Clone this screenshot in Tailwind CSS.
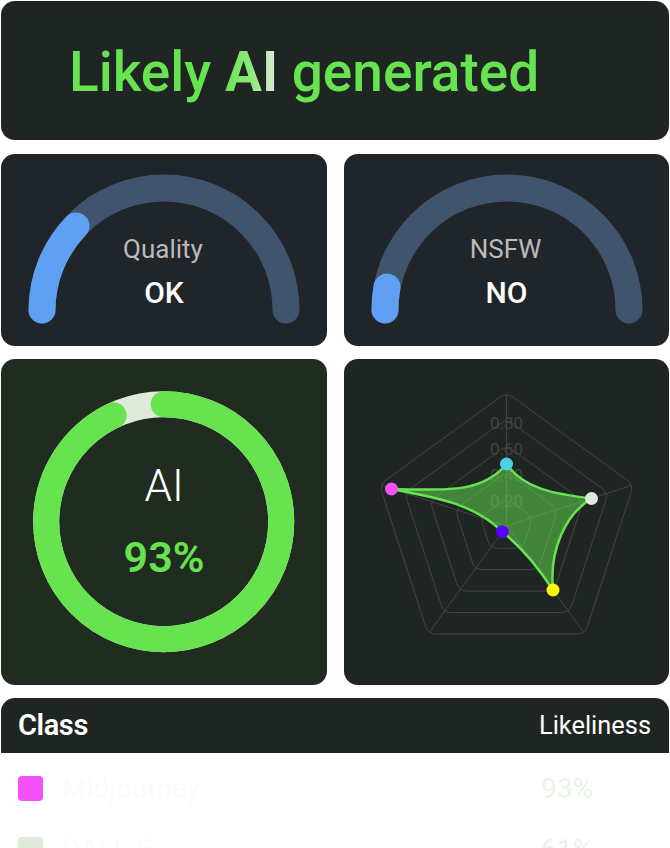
<!DOCTYPE html>
<html lang="en">
<head>
    <meta charset="UTF-8">
    <meta name="viewport" content="width=device-width, initial-scale=1.0">
    <title>AI image report</title>
    <script src="https://cdn.jsdelivr.net/npm/@tailwindcss/browser@4"></script>
</head>
<body class="bg-white">
    <div class="h-[848px] overflow-hidden px-px pt-px font-['Roboto',sans-serif]">
        <!-- verdict -->
        <div class="h-[139px] rounded-[14px] bg-[#1f2523] pl-[68px] pt-[36px]">
            <h1 class="text-[55px] leading-[70px] font-medium text-[#66e34f]">
                Likely <span class="font-bold bg-linear-to-r from-[#66e34f] via-[#8eea7b] to-[#dfeadb] bg-clip-text text-transparent">AI</span> generated
            </h1>
        </div>

        <!-- gauges -->
        <div class="mt-[14px] grid grid-cols-[326px_325px] gap-x-[17px]">
            <div class="relative h-[192px] rounded-[14px] bg-[#20252a]">
                <svg width="326" height="192" viewBox="0 0 326 192" fill="none" stroke-linecap="round" stroke-width="27">
                    <path d="M41 156 A122 122 0 0 1 285 156" stroke="#40546d"/>
                    <path d="M41 156 A122 122 0 0 1 75 72" stroke="#60a0f3"/>
                </svg>
                <div class="absolute inset-x-0 top-[79px] text-center">
                    <p class="text-[26px] leading-[32px] text-[#bdbbb9] -translate-x-px">Quality</p>
                    <p class="mt-[11px] text-[30px] leading-[34px] font-medium text-white">OK</p>
                </div>
            </div>
            <div class="relative h-[192px] rounded-[14px] bg-[#20252a]">
                <svg width="325" height="192" viewBox="0 0 325 192" fill="none" stroke-linecap="round" stroke-width="27">
                    <path d="M41 156 A122 122 0 0 1 285 156" stroke="#40546d"/>
                    <path d="M41 156 A122 122 0 0 1 43 133" stroke="#60a0f3"/>
                </svg>
                <div class="absolute inset-x-0 top-[79px] text-center">
                    <p class="text-[26px] leading-[32px] text-[#bdbbb9] -translate-x-px">NSFW</p>
                    <p class="mt-[11px] text-[30px] leading-[34px] font-medium text-white">NO</p>
                </div>
            </div>
        </div>

        <!-- score ring and radar -->
        <div class="mt-[13px] grid grid-cols-[326px_325px] gap-x-[17px]">
            <div class="relative h-[326px] rounded-[14px] bg-[#212c21]">
                <svg width="326" height="326" viewBox="0 0 326 326" fill="none" stroke-width="26">
                    <circle cx="162.700" cy="162.700" r="117.500" stroke="#dfeadb"/>
                    <circle cx="162.700" cy="162.700" r="117.500" stroke="#66e34f" stroke-linecap="round" pathLength="100" stroke-dasharray="93 7" transform="rotate(-90 162.700 162.700)"/>
                </svg>
                <div class="absolute inset-x-0 top-[99px] text-center">
                    <p class="text-[44px] leading-[56px] font-light text-white">AI</p>
                    <p class="mt-[15px] text-[43px] leading-[56px] font-semibold text-[#66e34f]">93%</p>
                </div>
            </div>
            <div class="relative h-[326px] rounded-[14px] bg-[#1f2523]">
                <svg width="325" height="326" viewBox="0 0 325 326" fill="none">
                    <g id="radarGrid" stroke="#424644" stroke-width="1"></g>
                    <g fill="#3f4441" font-family="Roboto, sans-serif" font-size="17" text-anchor="middle">
                        <text x="162.500" y="70">0.80</text>
                        <text x="162.500" y="96">0.60</text>
                        <text x="162.500" y="122">0.40</text>
                        <text x="162.500" y="148">0.20</text>
                    </g>
                    <path d="M162.500 105 C180 130 210 135 247.500 139.500 C222 155 205 190 209 231 C192 205 176 187 158.300 172.700 C130 145 95 139 47.500 130 C110 132 140 132 162.500 105 Z" fill="#66e34f" fill-opacity="0.5" stroke="#66e34f" stroke-width="2.500"/>
                    <circle cx="162.500" cy="105" r="6.500" fill="#4dd0e8"/>
                    <circle cx="247.500" cy="139.500" r="6.500" fill="#dfeadb"/>
                    <circle cx="209" cy="231" r="6.500" fill="#fff20a"/>
                    <circle cx="158.300" cy="172.700" r="6.500" fill="#5500ff"/>
                    <circle cx="47.500" cy="130" r="6.500" fill="#f551f8"/>
                </svg>
            </div>
        </div>

        <!-- class table -->
        <div class="mt-[13px] flex h-[55px] items-center justify-between rounded-t-[14px] bg-[#1f2523] pl-[17px] pr-[18px] text-white">
            <span class="text-[29px] font-semibold tracking-[-0.4px]">Class</span>
            <span class="text-[25.400px]">Likeliness</span>
        </div>
        <div class="flex h-[61px] items-center justify-between pl-[17px] pr-[76px] pt-[10px]">
            <div class="flex items-center gap-[19px]">
                <span class="h-[25px] w-[25px] rounded bg-[#f551f8]"></span>
                <span class="text-[28px] text-[#fbfbfb]">Midjourney</span>
            </div>
            <span class="text-[28px] text-[#e9f4e6]">93%</span>
        </div>
        <div class="flex h-[61px] items-center justify-between pl-[17px] pr-[76px] pt-[10px]">
            <div class="flex items-center gap-[19px]">
                <span class="h-[25px] w-[25px] rounded bg-[#dfeadb]"></span>
                <span class="text-[28px] text-[#fbfbfb]">DALL·E</span>
            </div>
            <span class="text-[28px] text-[#e9f4e6]">61%</span>
        </div>
    </div>
    <script>
        // radar rings have rounded corners, so build the paths from the five vertices
        var cx = 162.5, cy = 167, corner = 8;
        var grid = document.getElementById('radarGrid');

        function vertex(radius, i) {
            var a = (i * 72 - 90) * Math.PI / 180;
            return [cx + radius * Math.cos(a), cy + radius * Math.sin(a)];
        }
        function towards(from, to) {
            var dx = to[0] - from[0], dy = to[1] - from[1];
            var len = Math.hypot(dx, dy);
            return [from[0] + dx / len * corner, from[1] + dy / len * corner];
        }
        function addPath(d) {
            var p = document.createElementNS('http://www.w3.org/2000/svg', 'path');
            p.setAttribute('d', d);
            grid.appendChild(p);
        }

        [133.5, 107, 80.5, 54, 27.5].forEach(function (radius) {
            var d = '';
            for (var i = 0; i < 5; i++) {
                var v = vertex(radius, i);
                var a = towards(v, vertex(radius, (i + 4) % 5));
                var b = towards(v, vertex(radius, (i + 1) % 5));
                d += (i ? 'L' : 'M') + a[0] + ' ' + a[1] + ' Q' + v[0] + ' ' + v[1] + ' ' + b[0] + ' ' + b[1] + ' ';
            }
            addPath(d + 'Z');
        });
        for (var i = 0; i < 5; i++) {
            var end = vertex(130.5, i);
            addPath('M' + cx + ' ' + cy + ' L' + end[0] + ' ' + end[1]);
        }
    </script>
</body>
</html>
